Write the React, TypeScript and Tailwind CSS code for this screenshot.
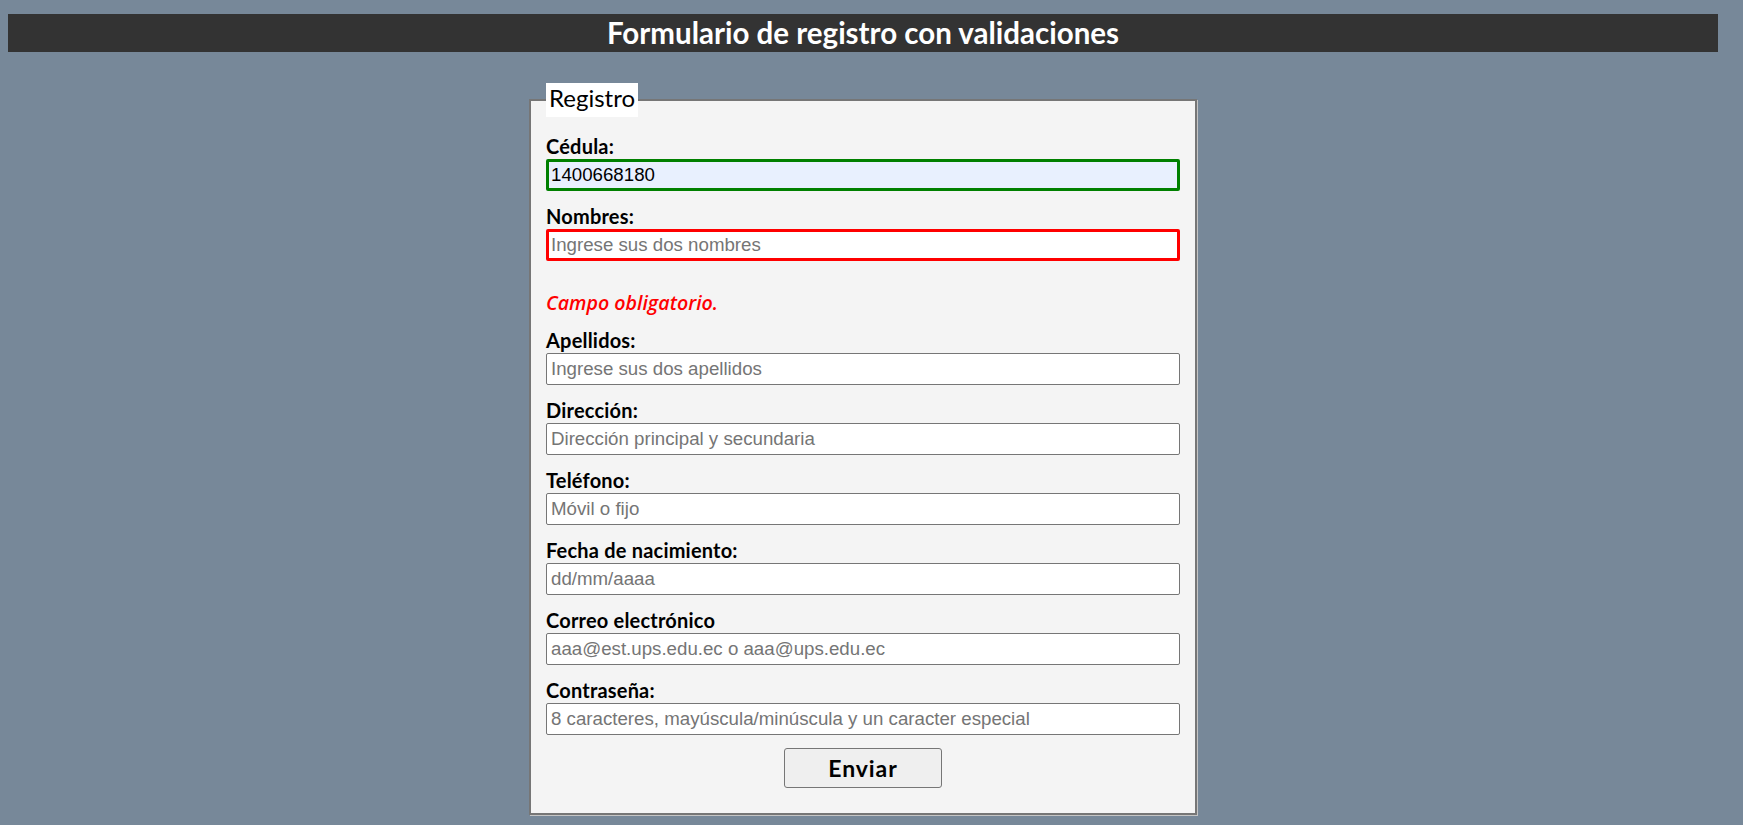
const fields = [
  { label: "Apellidos:", placeholder: "Ingrese sus dos apellidos" },
  { label: "Dirección:", placeholder: "Dirección principal y secundaria" },
  { label: "Teléfono:", placeholder: "Móvil o fijo" },
  { label: "Fecha de nacimiento:", placeholder: "dd/mm/aaaa" },
  { label: "Correo electrónico", placeholder: "aaa@est.ups.edu.ec o aaa@ups.edu.ec" },
  { label: "Contraseña:", placeholder: "8 caracteres, mayúscula/minúscula y un caracter especial" },
];

const labelCls =
  "block text-[20px] leading-[22px] tracking-[0.2px] font-bold text-black font-['Lato',sans-serif]";
const inputCls =
  "mt-[2px] block h-[32px] w-full rounded-[2px] text-[18.7px] text-black font-['Liberation_Sans',Arial,sans-serif] outline-none placeholder:text-[#757575]";

function Field({ label, placeholder }: { label: string; placeholder: string }) {
  return (
    <div className="mb-[14px]">
      <label className={labelCls}>{label}</label>
      <input
        className={`${inputCls} border border-[#767676] bg-white pl-[4px] pr-[2px]`}
        placeholder={placeholder}
      />
    </div>
  );
}

export default function App() {
  return (
    <div className="min-h-screen w-full bg-[#778899]">
      <div className="w-[1726px] px-[8px] pt-[14px]">
        <h1 className="h-[38px] bg-[#333333] text-center text-[29.5px] leading-[38px] font-bold text-white font-['Lato',sans-serif]">
          Formulario de registro con validaciones
        </h1>

        <fieldset className="mx-auto mt-[31px] w-[668px] border-2 border-solid border-[#767676] bg-[#f4f4f4] px-[15px] pt-[18px] pb-[25px] shadow-[1px_1px_0_#c4c4c4]">
          <legend className="bg-white px-[3px] pb-[4px] text-[24px] leading-[30px] text-black font-['Lato',sans-serif]">
            Registro
          </legend>

          <div className="mb-[14px]">
            <label className={labelCls}>Cédula:</label>
            <input
              className={`${inputCls} border-[3px] border-[#008000] bg-[#e8f0fe] pl-[2px] pr-[2px]`}
              defaultValue="1400668180"
            />
          </div>

          <div>
            <label className={labelCls}>Nombres:</label>
            <input
              className={`${inputCls} border-[3px] border-[#ff0000] bg-white pl-[2px] pr-[2px]`}
              placeholder="Ingrese sus dos nombres"
            />
          </div>

          <p className="mt-[31px] mb-[15px] text-[19.6px] leading-[22px] font-semibold italic text-[#ff0000] font-['Open_Sans',sans-serif]">
            Campo obligatorio.
          </p>

          {fields.map((f) => (
            <Field key={f.label} label={f.label} placeholder={f.placeholder} />
          ))}

          <button
            type="button"
            className="mx-auto -mt-px block h-[40px] w-[158px] rounded-[3px] border border-[#767676] bg-[#efefef] text-[23px] tracking-[0.9px] font-bold text-black font-['Lato',sans-serif]"
          >
            Enviar
          </button>
        </fieldset>
      </div>
    </div>
  );
}
